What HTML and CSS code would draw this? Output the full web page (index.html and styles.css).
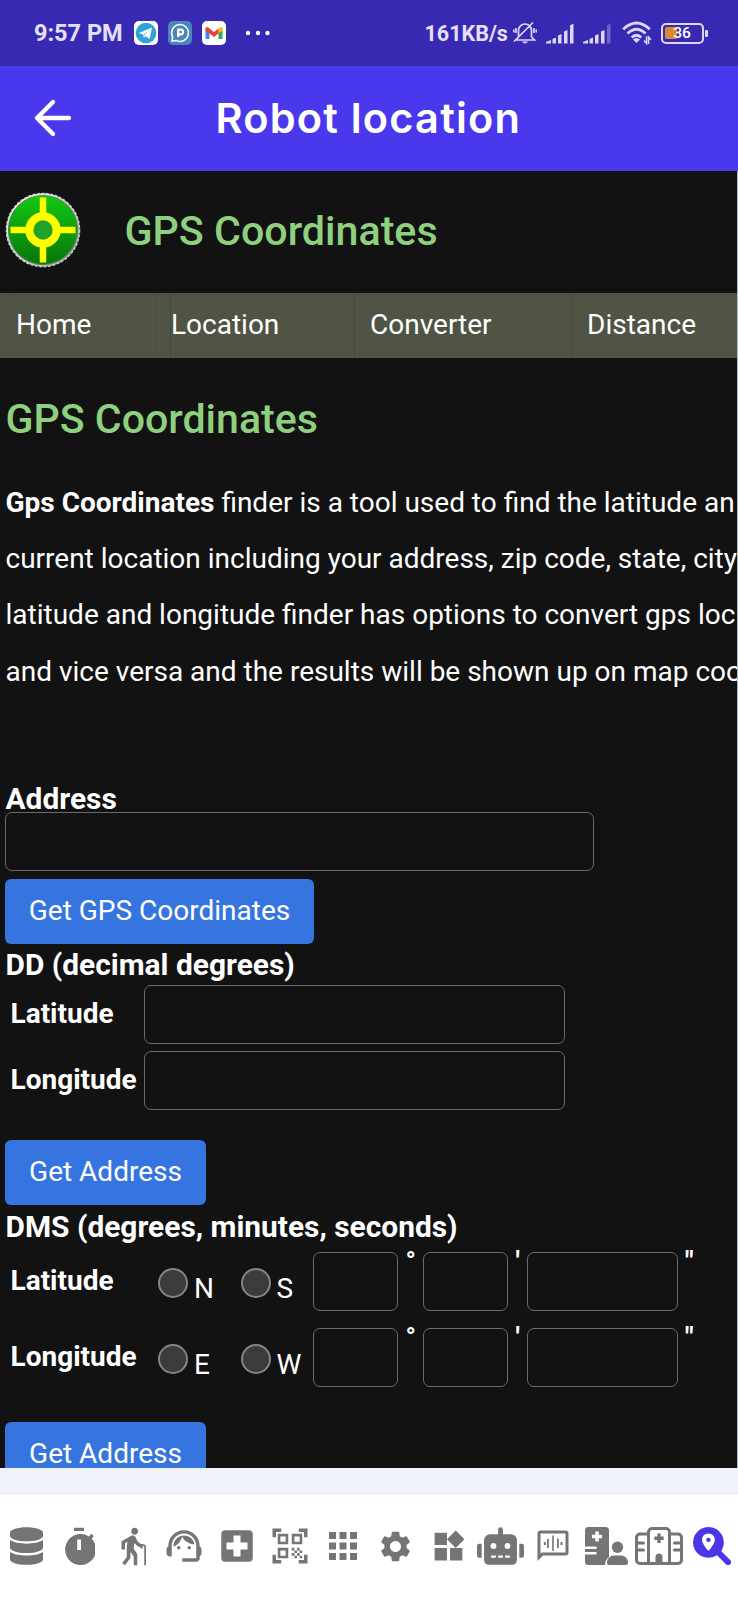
FILE: index.html
```html
<!DOCTYPE html>
<html lang="en">
<head>
<meta charset="utf-8">
<title>Robot location</title>
<link rel="stylesheet" href="styles.css">
</head>
<body>
<div class="status">
  <span class="clock">9:57 PM</span>
  <svg class="app-icon" viewBox="0 0 24 24"><rect width="24" height="24" rx="5" fill="#fff"/><circle cx="12" cy="12" r="10.3" fill="#2ea2db"/><path d="M4.8 12 18 6.6 15.6 18 11.6 15.2 9.7 17 9.3 13.5Z" fill="#fff"/><path d="M9.5 13.6 15.8 8.7 10.6 14.3 9.7 16.6Z" fill="#9bcbe6"/></svg>
  <svg class="app-icon" viewBox="0 0 24 24"><rect width="24" height="24" rx="5" fill="#4b86bb"/><path d="M4 20.3 4.6 16A8.4 8.4 0 1 1 8 19.4Z" fill="none" stroke="#fff" stroke-width="1.5" stroke-linejoin="round"/><path d="M10.2 16V8.700h2.600a2.300 2.300 0 0 1 0 4.600h-2.600" fill="none" stroke="#fff" stroke-width="2.200"/></svg>
  <svg class="app-icon" viewBox="0 0 24 24"><rect width="24" height="24" rx="5" fill="#fff"/><path d="M3.500 7.500V18h4V10.500Z" fill="#4285f4"/><path d="M20.500 7.500V18h-4V10.500Z" fill="#34a853"/><path d="M16.500 7.500 19 6q1.500 0 1.500 2v1.500l-4 3Z" fill="#fbbc04"/><path d="M3.500 9.500V8q0-2 1.500-2 1 0 2.500 1.500l4.500 3.400 4.500-3.400v5L12 16l-4.500-3.500Z" fill="#ea4335"/></svg>
  <svg class="dots" viewBox="0 0 26 6"><circle cx="3" cy="3" r="2.200"/><circle cx="13" cy="3" r="2.200"/><circle cx="22.500" cy="3" r="2.200"/></svg>
  <span class="speed">161KB/s</span>
  <svg class="mute" viewBox="0 0 24 24"><g fill="none" stroke="#dcd8fa" stroke-width="1.700"><path d="M3 19H21.500L18.500 16V9.500a6.500 6.500 0 0 0-13 0V16L3 19M1 20.500 20 1.500M3 7v5M.8 8.500v3M21 7v5M23.300 8.500v3"/></g><path d="M9 20.500h6q-1 2-3 2t-3-2Z" fill="#dcd8fa"/></svg>
  <svg class="bars" viewBox="0 0 28 21"><path d="M0 20.500V19l5-2v3.500ZM6.500 16l3.500-1.500v6h-3.500ZM12 12.500l3.500-1.500v9.500H12ZM18 8.500 21.500 7v13.500H18ZM24 2.500 27.500.5v20H24Z"/></svg>
  <svg class="bars" viewBox="0 0 28 21"><path d="M0 20.500V19l5-2v3.500ZM6.500 16l3.500-1.500v6h-3.500ZM12 12.500l3.500-1.500v9.500H12ZM18 8.500 21.500 7v13.500H18Z"/><path d="M24 2.500 27.500.5v20H24Z" opacity=".35"/></svg>
  <svg class="wifi" viewBox="0 0 30 24"><g fill="none" stroke="#dcd8fa" stroke-width="2.900"><path d="M1.200 8.200Q14.500-4 27.800 8.200M5.500 12.500Q14.500 4 23.500 12.500M9.700 16.500Q14.500 12 19.300 16.500"/></g><path d="M11 18.500q3.500-3 7 0L14.500 22Z" fill="#dcd8fa"/><path d="M24.500 15.500v7l-2.500-3M26.500 23v-7l2.500 3" fill="none" stroke="#dcd8fa" stroke-width="1.500"/></svg>
  <span class="battery"><span class="level"></span><span class="percent">36</span></span>
</div>
<header class="appbar">
  <svg class="back" viewBox="0 0 40 40"><path d="M36 20H4M20 4 4 20 20 36" fill="none" stroke="#fff" stroke-width="4.300" stroke-linecap="round" stroke-linejoin="round"/></svg>
  <h1 class="title">Robot location</h1>
</header>
<main class="page">
  <div class="brand">
    <svg class="logo" viewBox="0 0 76 76">
      <defs><linearGradient id="disc" x1="0" y1="0" x2="0" y2="1"><stop offset="0" stop-color="#13c911"/><stop offset="1" stop-color="#07740a"/></linearGradient><linearGradient id="rim" x1="0" y1="0" x2="1" y2="1"><stop offset="0" stop-color="#fff"/><stop offset="1" stop-color="#9b9b9b"/></linearGradient></defs>
      <circle cx="38" cy="38" r="36.700" fill="url(#rim)" stroke="#d0d0d0" stroke-width="1.200" stroke-dasharray="3 1.500"/>
      <circle cx="38" cy="38" r="34.500" fill="url(#disc)" stroke="#3d8d43" stroke-width="1.200"/>
      <path d="M38 5.500v18M38 52v18.500M5.500 38h18M52 38h18.500" stroke="#ff0" stroke-width="6.500"/>
      <circle cx="38" cy="38" r="13.700" fill="#23a22b" stroke="#ff0" stroke-width="8"/>
    </svg>
    <span class="brand-name">GPS Coordinates</span>
  </div>
  <nav class="menu"><a class="m1">Home</a><a class="m2">Location</a><a class="m3">Converter</a><a class="m4">Distance</a></nav>
  <h2 class="heading">GPS Coordinates</h2>
  <p class="intro"><b>Gps Coordinates</b> finder is a tool used to find the latitude an<br>current location including your address, zip code, state, city<br>latitude and longitude finder has options to convert gps loc<br>and vice versa and the results will be shown up on map coo</p>
  <section class="group address">
    <h3>Address</h3>
    <input class="field wide">
    <button class="btn b-gps">Get GPS Coordinates</button>
  </section>
  <section class="group">
    <h3 class="dd">DD (decimal degrees)</h3>
    <div class="row"><label>Latitude</label><input class="field medium"></div>
    <div class="row"><label>Longitude</label><input class="field medium"></div>
    <button class="btn b-addr">Get Address</button>
  </section>
  <section class="group">
    <h3 class="dms-title">DMS (degrees, minutes, seconds)</h3>
    <div class="dms"><label>Latitude</label><i class="radio"></i><span class="dir">N</span><i class="radio"></i><span class="dir">S</span><input class="field deg"><b class="unit u1">°</b><input class="field deg"><b class="unit u2">'</b><input class="field sec"><b class="unit u3">"</b></div>
    <div class="dms"><label>Longitude</label><i class="radio"></i><span class="dir">E</span><i class="radio"></i><span class="dir">W</span><input class="field deg"><b class="unit u1">°</b><input class="field deg"><b class="unit u2">'</b><input class="field sec"><b class="unit u3">"</b></div>
    <button class="btn b-last">Get Address</button>
  </section>
</main>
<div class="band"></div>
<footer class="tabs">
  <svg width="33" height="38" viewBox="0 0 448 512"><path d="M448 73.143v45.714C448 159.143 347.667 192 224 192S0 159.143 0 118.857V73.143C0 32.857 100.333 0 224 0s224 32.857 224 73.143zM448 176v102.857C448 319.143 347.667 352 224 352S0 319.143 0 278.857V176c48.125 33.143 136.208 48.572 224 48.572S399.874 209.143 448 176zm0 160v102.857C448 479.143 347.667 512 224 512S0 479.143 0 438.857V336c48.125 33.143 136.208 48.572 224 48.572S399.874 369.143 448 336z"/></svg>
  <svg width="32" height="38" viewBox="0 0 32 38"><path fill-rule="evenodd" d="M11 .8h10V4H11ZM26 9.500 27.800 7.500 27 6.700 28.700 7 30.500 9 29.800 10.500 28.500 11.500A15.500 15.500 0 1 1 26 9.500ZM14.200 12.500v10.500h3.800V12.500Z"/></svg>
  <svg width="42" height="42" viewBox="0 0 24 24"><path d="M13.500 5.500c1.100 0 2-.9 2-2s-.9-2-2-2-2 .9-2 2 .9 2 2 2zM20 12.500V23h-1V12.500c0-.28-.22-.5-.5-.5s-.5.22-.5.5v1h-1v-.69c-1.460-.38-2.700-1.290-3.510-2.520-.31.87-.49 1.780-.49 2.710 0 .23.02.46.03.69L15 16.500V23h-2v-5l-1.780-2.540L11 19l-3 4-1.600-1.200L9 18.330V13c0-1.150.18-2.290.5-3.390L8 10.460V14H6V9.300l5.400-3.070v.01c.59-.31 1.320-.33 1.940.03.36.21.63.51.8.85l.79 1.670C15.580 10.100 16.940 11 18.500 11c.83 0 1.500.67 1.500 1.500z"/></svg>
  <svg width="42" height="42" viewBox="0 0 24 24"><path d="M21 12.220C21 6.730 16.740 3 12 3c-4.690 0-9 3.650-9 9.280-.6.34-1 .98-1 1.720v2c0 1.100.9 2 2 2h1v-6.100c0-3.870 3.130-7 7-7s7 3.130 7 7V19h-8v2h8c1.100 0 2-.9 2-2v-1.220c.59-.31 1-.92 1-1.640v-2.300c0-.7-.41-1.310-1-1.620z"/><circle cx="9" cy="13" r="1"/><circle cx="15" cy="13" r="1"/><path d="M18 11.030C17.520 8.180 15.040 6 12.050 6c-3.030 0-6.290 2.510-6.030 6.450 2.470-1.010 4.330-3.210 4.860-5.890 1.310 2.630 4 4.440 7.120 4.470z"/></svg>
  <svg width="42" height="42" viewBox="0 0 24 24"><path d="M19 3H5c-1.100 0-1.990.9-1.990 2L3 19c0 1.100.9 2 2 2h14c1.100 0 2-.9 2-2V5c0-1.100-.9-2-2-2zm-1 11h-4v4h-4v-4H6v-4h4V6h4v4h4v4z"/></svg>
  <svg width="42" height="42" viewBox="0 0 24 24"><path d="M9.500 6.500v3h-3v-3h3M11 5H5v6h6V5zm-1.500 9.500v3h-3v-3h3M11 13H5v6h6v-6zm6.500-6.500v3h-3v-3h3M19 5h-6v6h6V5zm-6 8h1.500v1.500H13V13zm1.500 1.500H16V16h-1.500v-1.500zM16 13h1.500v1.500H16V13zm-3 3h1.500v1.500H13V16zm1.500 1.500H16V19h-1.500v-1.500zM16 16h1.500v1.500H16V16zm1.500-1.500H19V16h-1.500v-1.500zm0 3H19V19h-1.500v-1.500zM22 7h-2V4h-3V2h5v5zm0 15v-5h-2v3h-3v2h5zM2 22h5v-2H4v-3H2v5zM2 2v5h2V4h3V2H2z"/></svg>
  <svg width="42" height="42" viewBox="0 0 24 24"><path d="M4 8h4V4H4v4zm6 12h4v-4h-4v4zm-6 0h4v-4H4v4zm0-6h4v-4H4v4zm6 0h4v-4h-4v4zm6-10v4h4V4h-4zm-6 4h4V4h-4v4zm6 6h4v-4h-4v4zm0 6h4v-4h-4v4z"/></svg>
  <svg width="37" height="37" viewBox="0 0 24 24"><path d="M19.140 12.940c.04-.3.06-.61.06-.94 0-.32-.02-.64-.07-.94l2.030-1.580c.18-.14.23-.41.12-.61l-1.920-3.320c-.12-.22-.37-.29-.59-.22l-2.390.96c-.5-.38-1.030-.7-1.620-.94l-.36-2.540c-.04-.24-.24-.41-.48-.41h-3.840c-.24 0-.43.17-.47.41l-.36 2.540c-.59.24-1.130.57-1.620.94l-2.390-.96c-.22-.08-.47 0-.59.22L2.740 8.870c-.12.21-.08.47.12.61l2.030 1.580c-.05.3-.09.63-.09.94s.02.64.07.94l-2.030 1.580c-.18.14-.23.41-.12.61l1.920 3.320c.12.22.37.29.59.22l2.390-.96c.5.38 1.030.7 1.620.94l.36 2.540c.05.24.24.41.48.41h3.840c.24 0 .44-.17.47-.41l.36-2.540c.59-.24 1.130-.56 1.620-.94l2.390.96c.22.08.47 0 .59-.22l1.920-3.320c.12-.22.07-.47-.12-.61l-2.010-1.580zM12 15.600c-1.980 0-3.600-1.620-3.600-3.600s1.620-3.600 3.600-3.600 3.600 1.620 3.600 3.600-1.620 3.600-3.600 3.600z"/></svg>
  <svg width="37" height="37" viewBox="0 0 24 24"><path d="M13 13v8h8v-8h-8zM3 21h8v-8H3v8zM3 3v8h8V3H3zm13.660-1.310L11 7.340 16.660 13l5.660-5.660-5.660-5.650z"/></svg>
  <svg width="47" height="38" viewBox="0 0 640 512"><path d="M32,224H64V416H32A32,32,0,0,1,0,384V256A32,32,0,0,1,32,224Zm512-48V448a64,64,0,0,1-64,64H160a64,64,0,0,1-64-64V176a80,80,0,0,1,80-80H288V32a32,32,0,0,1,64,0V96H464A80,80,0,0,1,544,176ZM264,256a40,40,0,1,0-40,40A40,40,0,0,0,264,256Zm-8,128H192v32h64Zm96,0H288v32h64ZM456,256a40,40,0,1,0-40,40A40,40,0,0,0,456,256Zm-8,128H384v32h64ZM640,256V384a32,32,0,0,1-32,32H576V224h32A32,32,0,0,1,640,256Z"/></svg>
  <svg width="32" height="32" viewBox="0 0 32 32"><path fill-rule="evenodd" d="M3.500.5h25a3 3 0 0 1 3 3v19a3 3 0 0 1-3 3H6L.5 31V3.500a3 3 0 0 1 3-3ZM3.500 3.500V23.500L4.800 22.500H28.500V3.500Z"/><path d="M6.800 12h2v3h-2ZM10 9h1.800v9H10ZM15.200 5.500h1.600v15.500h-1.600ZM20 8.500h1.800v9.500H20ZM23.500 12h2v3h-2Z"/></svg>
  <svg width="43" height="38" viewBox="0 0 43 38"><path fill-rule="evenodd" d="M3.500 0h17a3.500 3.500 0 0 1 3.500 3.500V30q-4 3-4 8H3.500A3.500 3.500 0 0 1 0 34.500V27.500H10.500a1.200 1.200 0 0 0 0-2.500H0V22h10.500a1.200 1.200 0 0 0 0-2.500H0V3.500A3.500 3.500 0 0 1 3.500 0ZM10.300 4.500v3.300H7v3.500h3.300v3.300h3.500v-3.300h3.300V7.800h-3.300V4.500Z"/><circle cx="32.500" cy="20.300" r="5.700"/><path d="M29 28.500h7a7 7 0 0 1 7 7.500q0 2-2 2H24q-2 0-2-2a7 7 0 0 1 7-7.500Z"/></svg>
  <svg width="48" height="38" viewBox="0 0 48 38"><g fill="none" stroke="#757575" stroke-width="3"><path d="M13.500 36.500V5a3.500 3.500 0 0 1 3.500-3.500H31A3.500 3.500 0 0 1 34.500 5V36.500M13.500 7H5A3.500 3.500 0 0 0 1.500 10.500V33A3.500 3.500 0 0 0 5 36.500H43A3.500 3.500 0 0 0 46.500 33V10.500A3.500 3.500 0 0 0 43 7H34.500"/><path d="M3 16h5.500M3 23h5.500M39.500 16H45M39.500 23H45" stroke-linecap="round"/></g><path d="M22.300 6.500h3.400v3h3v3.400h-3v3h-3.400v-3h-3V9.500h3ZM20.500 37V30a3.500 3.500 0 0 1 7 0v7Z"/></svg>
  <svg class="active" width="38" height="38" viewBox="0 0 512 512"><path d="M350 350 472 472" stroke="#4a35e8" stroke-width="80" stroke-linecap="round"/><path fill-rule="evenodd" d="M208 0a208 208 0 1 0 .1 0ZM208 88c-48 0-86 38-86 84 0 52 58 118 76 142q10 12 20 0c18-24 76-90 76-142 0-46-38-84-86-84Zm0 56a29 29 0 1 1-.1 0Z"/></svg>
</footer>
</body>
</html>
```

FILE: styles.css
```css
* { box-sizing: border-box; }
body { margin: 0; width: 738px; height: 1600px; overflow: hidden; background: #fff; font-family: Roboto, sans-serif; color: #fff; display: flex; flex-direction: column; }
svg { display: block; flex: none; }

.status { height: 66px; flex: none; background: #3729b1; display: flex; align-items: center; padding-left: 34px; color: #e4e0fb; font-weight: 700; font-size: 23.500px; white-space: nowrap; }
.clock { width: 99.500px; line-height: 69px; }
.app-icon { width: 24px; height: 24px; margin-right: 10px; }
.dots { width: 26px; height: 6px; margin-left: 9px; fill: #fff; }
.speed { margin-left: 154px; width: 88px; line-height: 69px; font-size: 21.500px; }
.mute { width: 24px; height: 24px; }
.bars { width: 28px; height: 21px; margin-left: 9px; fill: #dcd8fa; }
.wifi { width: 30px; height: 24px; margin-left: 11px; }
.battery { position: relative; width: 43px; height: 21px; margin-left: 9px; border: 2px solid #dcd8fa; border-radius: 5px; display: flex; align-items: center; justify-content: center; font-size: 15.500px; font-weight: 500; color: #fff; }
.battery::after { content: ""; position: absolute; right: -6px; top: 5px; width: 2.500px; height: 7px; border-radius: 1px; background: #dcd8fa; }
.level { position: absolute; left: 2.500px; top: 2.500px; width: 12px; height: 12px; border-radius: 2px; background: #d98a33; }
.percent { position: relative; line-height: 17px; }

.appbar { height: 105px; flex: none; background: #4a38ed; display: flex; align-items: center; padding-left: 33px; }
.back { width: 40px; height: 40px; margin-top: -1px; }
.title { margin: 0 0 0 142.500px; font: 600 41.500px/103px Inter, sans-serif; letter-spacing: 1.200px; white-space: nowrap; }

.page { height: 1297px; flex: none; overflow: hidden; background: #121212; border-right: 1px solid #a9bcc6; }
.brand { height: 122px; display: flex; align-items: center; padding: 0 0 4px 5px; }
.logo { width: 76px; height: 76px; }
.brand-name { margin-left: 43.500px; padding-top: 2px; font-size: 41.200px; font-weight: 500; line-height: 120px; color: #8fd07e; }
.menu { height: 65px; display: flex; background: #505444; font-size: 28px; line-height: 63px; }
.menu a { border-left: 1px solid #474b3d; }
.menu .m1 { margin-left: 14px; width: 142px; padding-left: 1px; border-left-color: #4c5041; border-right: 1px solid #4c5041; }
.menu .m2 { margin-left: 14px; width: 184px; }
.menu .m3 { width: 218px; padding-left: 15px; }
.menu .m4 { padding-left: 14px; flex: 1; }
.heading { margin: 0; height: 116px; padding-left: 5.500px; font-size: 41.100px; font-weight: 500; line-height: 122px; color: #8fd07e; }
.intro { margin: 0; height: 225px; padding: 1px 0 0 5.500px; font-size: 28px; line-height: 56.200px; white-space: nowrap; }
.group { padding-left: 5px; }
.address { padding-top: 84px; }
.group h3 { margin: 0; padding-left: .5px; font-size: 29.900px; font-weight: 700; line-height: 31px; height: 29px; white-space: nowrap; }
.group h3.dd { line-height: 42px; height: 41px; }
.group h3.dms-title { line-height: 43px; height: 46.500px; }
.field { display: block; flex: none; height: 59px; padding: 0; background: #121212; border: 1.500px solid #6b6b6b; border-radius: 7px; }
.wide { width: 589px; }
.medium { width: 421px; }
.btn { display: block; height: 65px; margin: 8px 0 0; padding: 0 0 2px; border: 0; border-radius: 6px; background: #3675df; color: #fff; font: 28px Roboto, sans-serif; }
.b-gps { width: 309px; }
.b-addr { width: 201px; margin-top: 23px; }
.row { display: flex; height: 66px; font-size: 28px; font-weight: 700; }
.row label { width: 139px; padding-left: 5.500px; line-height: 57px; flex: none; }
.dms { display: flex; height: 76.500px; font-size: 28px; }
.dms label { width: 153px; padding-left: 5.500px; line-height: 58px; font-weight: 700; flex: none; }
.radio { width: 30px; height: 30px; margin-top: 16px; border: 2px solid #858585; border-radius: 50%; background: #3b3b3b; flex: none; }
.dir { width: 52.500px; padding-left: 6px; line-height: 73px; flex: none; }
.dms .dir + .field { margin-left: -10.500px; }
.deg { width: 85.500px; }
.sec { width: 151px; }
.unit { font-size: 27px; line-height: 21px; padding-left: 7.500px; flex: none; }
.u1 { width: 24.500px; }
.u2 { width: 18.500px; }
.u3 { width: 24px; }
.b-last { width: 201px; margin-top: 17px; }

.band { height: 26px; flex: none; background: #eff3f9; border-bottom: 1px solid #e6e7ed; }
.tabs { flex: 1; display: grid; grid-template-columns: repeat(14, 1fr); align-items: center; justify-items: center; padding-bottom: 2px; background: #fff; fill: #757575; }
.active { fill: #4a35e8; }
```
